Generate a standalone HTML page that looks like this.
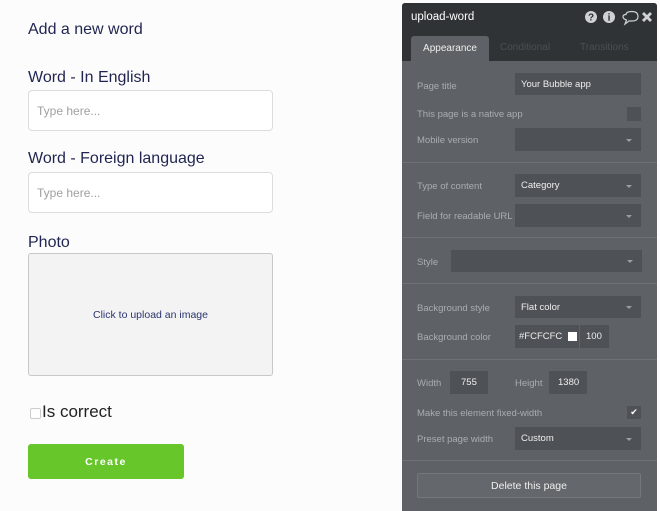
<!DOCTYPE html>
<html><head><meta charset="utf-8"><style>
*{box-sizing:border-box;margin:0;padding:0}
body{width:660px;height:511px;background:#fcfcfc;font-family:"Liberation Sans",sans-serif;position:relative;overflow:hidden}
.a{position:absolute}
.lbl{color:#1f2550;font-size:16px}
.inp{border:1px solid #dcdcdc;border-radius:4px;background:#fff;color:#a0a0a0;font-size:12px;padding-left:8px;display:flex;align-items:center}
.p{color:#a9adb0;font-size:9.5px;margin-top:1px}
.f{background:#4e5256;color:#eee;font-size:9.5px;display:flex;align-items:center;padding-left:6px}
.dd::after{content:"";position:absolute;right:9px;top:50%;margin-top:-1px;border-left:3.5px solid transparent;border-right:3.5px solid transparent;border-top:3.5px solid #9a9ea2}
.sep{position:absolute;left:402px;width:255px;height:1px;background:#6e7276}
</style></head><body>
<div class="a lbl" style="left:28px;top:21px;font-size:16px">Add a new word</div>
<div class="a lbl" style="left:28px;top:69px">Word - In English</div>
<div class="a inp" style="left:28px;top:90px;width:245px;height:41px">Type here...</div>
<div class="a lbl" style="left:28px;top:150px">Word - Foreign language</div>
<div class="a inp" style="left:28px;top:172px;width:245px;height:41px">Type here...</div>
<div class="a lbl" style="left:28px;top:234px">Photo</div>
<div class="a" style="left:28px;top:253px;width:245px;height:123px;border:1px solid #c8c8c8;border-radius:3px;background:#f3f3f3;display:flex;align-items:center;justify-content:center;color:#2a3470;font-size:10.5px">Click to upload an image</div>
<div class="a" style="left:30px;top:408px;width:11px;height:11px;border:1px solid #ccc;border-radius:2px;background:#fff"></div>
<div class="a" style="left:42px;top:402px;font-size:17px;color:#222">Is correct</div>
<div class="a" style="left:28px;top:444px;width:156px;height:35px;background:#67c62a;border-radius:3px;color:#fff;font-weight:bold;font-size:10.5px;letter-spacing:1.5px;display:flex;align-items:center;justify-content:center">Create</div>

<div class="a" style="left:402px;top:3px;width:255px;height:508px;background:#5e6266;border-radius:3px 3px 0 0"></div>
<div class="a" style="left:402px;top:3px;width:255px;height:58px;background:#2f3336;border-radius:3px 3px 0 0"></div>
<div class="a" style="left:411px;top:11px;color:#fff;font-size:11.5px">upload-word</div>
<svg class="a" style="left:584px;top:10px" width="70" height="16" viewBox="0 0 70 16">
<circle cx="7" cy="7" r="6" fill="#cfd1d3"/><text x="7" y="10.5" font-size="10" font-weight="bold" text-anchor="middle" fill="#2f3336" font-family="Liberation Sans">?</text>
<circle cx="25" cy="7" r="6" fill="#cfd1d3"/><text x="25" y="10.5" font-size="10" font-weight="bold" text-anchor="middle" fill="#2f3336" font-family="Liberation Serif">i</text>
<path d="M43 4.5 Q43 1.5 49 1.5 Q55 1.5 55 6.5 Q55 11 49 11 L46 11 L42 14 L43.5 10 Q40 9 40 6.5 Q40 4.5 43 4.5Z" fill="none" stroke="#cfd1d3" stroke-width="1.2" transform="translate(-1,0)"/>
<path d="M59 3 L67 11 M67 3 L59 11" stroke="#cfd1d3" stroke-width="2.8"/>
</svg>
<div class="a" style="left:411px;top:36px;width:78px;height:25px;background:#5e6266;border-radius:3px 3px 0 0;color:#eee;font-size:10px;display:flex;align-items:center;justify-content:center">Appearance</div>
<div class="a" style="left:500px;top:42px;color:#4a4f53;font-size:10px">Conditional</div>
<div class="a" style="left:580px;top:42px;color:#4a4f53;font-size:10px">Transitions</div>

<div class="a p" style="left:417px;top:80px">Page title</div>
<div class="a f" style="left:515px;top:73px;width:126px;height:22px">Your Bubble app</div>
<div class="a p" style="left:417px;top:108px">This page is a native app</div>
<div class="a" style="left:627px;top:107px;width:14px;height:14px;background:#4e5256"></div>
<div class="a p" style="left:417px;top:134px">Mobile version</div>
<div class="a f dd" style="left:515px;top:128px;width:126px;height:23px"></div>
<div class="sep" style="top:162px"></div>
<div class="a p" style="left:417px;top:180px">Type of content</div>
<div class="a f dd" style="left:515px;top:174px;width:126px;height:23px">Category</div>
<div class="a p" style="left:417px;top:210px">Field for readable URL</div>
<div class="a f dd" style="left:515px;top:204px;width:126px;height:23px"></div>
<div class="sep" style="top:237px"></div>
<div class="a p" style="left:417px;top:256px">Style</div>
<div class="a f dd" style="left:451px;top:250px;width:191px;height:22px"></div>
<div class="sep" style="top:283px"></div>
<div class="a p" style="left:417px;top:302px">Background style</div>
<div class="a f dd" style="left:515px;top:296px;width:126px;height:22px">Flat color</div>
<div class="a p" style="left:417px;top:331px">Background color</div>
<div class="a f" style="left:515px;top:325px;width:64px;height:23px;padding-left:4px">#FCFCFC<span style="display:inline-block;width:9px;height:9px;background:#fff;margin-left:6px"></span></div>
<div class="a f" style="left:580px;top:325px;width:29px;height:23px;padding-left:6px">100</div>
<div class="sep" style="top:359px"></div>
<div class="a p" style="left:417px;top:377px">Width</div>
<div class="a f" style="left:450px;top:371px;width:38px;height:23px;padding-left:11px">755</div>
<div class="a p" style="left:515px;top:377px">Height</div>
<div class="a f" style="left:549px;top:371px;width:38px;height:23px;padding-left:9px">1380</div>
<div class="a p" style="left:417px;top:407px">Make this element fixed-width</div>
<div class="a" style="left:627px;top:406px;width:14px;height:13px;background:#4e5256;color:#fff;font-size:9px;text-align:center;line-height:13px">✔</div>
<div class="a p" style="left:417px;top:433px">Preset page width</div>
<div class="a f dd" style="left:515px;top:427px;width:126px;height:23px">Custom</div>
<div class="sep" style="top:460px"></div>
<div class="a" style="left:417px;top:473px;width:224px;height:25px;border:1px solid #74787c;background:#64686c;border-radius:2px;color:#eee;font-size:10.5px;display:flex;align-items:center;justify-content:center">Delete this page</div>
</body></html>
